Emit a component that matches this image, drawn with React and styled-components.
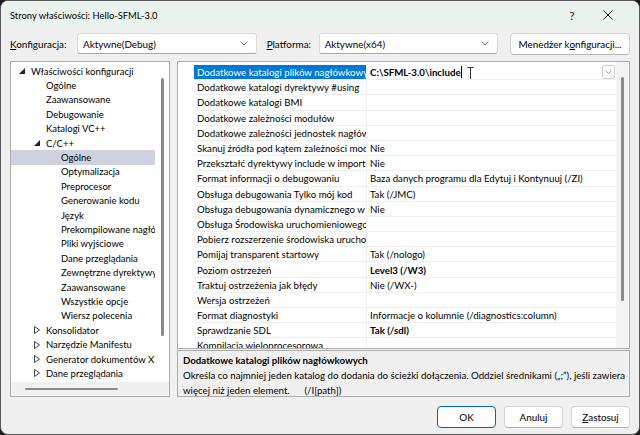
import React from "react";
import styled, { createGlobalStyle } from "styled-components";

const GlobalStyle = createGlobalStyle`
  html, body {
    margin: 0;
    padding: 0;
    background: #1c1c1c;
  }
  body {
    font-family: Lato, "Noto Sans", sans-serif;
    font-size: 9.9px;
    color: #000;
  }
  * {
    box-sizing: border-box;
  }
`;

const Window = styled.div`
  width: 640px;
  height: 435px;
  display: flex;
  flex-direction: column;
  background: #f0f0f0;
  border: 1px solid #5a5a5a;
  border-radius: 8px;
  overflow: hidden;
`;

const TitleBar = styled.div`
  height: 28px;
  flex-shrink: 0;
  display: flex;
  align-items: center;
  padding-left: 9px;
  background: #eaf3ee;
  font-size: 9.4px;
`;
const TitleText = styled.span`
  flex: 1;
`;
const CaptionButton = styled.div`
  width: 36px;
  height: 28px;
  display: flex;
  align-items: center;
  justify-content: center;
  font-size: 12px;
  color: #222;
`;

const Toolbar = styled.div`
  display: flex;
  align-items: center;
  height: 21px;
  margin-top: 4px;
  padding: 0 9px;
`;
const Label = styled.span`
  width: ${(p) => p.$w}px;
  flex-shrink: 0;
`;
const Combo = styled.div`
  width: 180px;
  height: 21px;
  display: flex;
  align-items: center;
  padding-left: 5px;
  padding-right: 8px;
  background: #fff;
  border: 1px solid #dcdcdc;
  border-bottom-color: #a8a8a8;
  border-radius: 3px;
  margin-right: ${(p) => p.$mr || 0}px;
  span {
    flex: 1;
  }
`;
const Button = styled.div`
  width: ${(p) => p.$w || 59}px;
  height: 22px;
  display: flex;
  align-items: center;
  justify-content: center;
  white-space: nowrap;
  background: #fdfdfd;
  border: ${(p) => (p.$default ? "1.5px solid #0067c0" : "1px solid #d4d4d4")};
  border-bottom-color: ${(p) => (p.$default ? "#0067c0" : "#b5b5b5")};
  border-radius: 4px;
  margin-left: ${(p) => p.$ml || 0}px;
`;

const Content = styled.div`
  display: flex;
  gap: 7px;
  margin-top: 7px;
  padding-left: 9px;
  height: 336px;
`;

const TreeBox = styled.div`
  width: 160px;
  display: flex;
  flex-direction: column;
  border: 1px solid #adadad;
  background: #fff;
  font-size: 9.5px;
`;
const TreeTop = styled.div`
  flex: 1;
  display: flex;
  min-height: 0;
`;
const TreeList = styled.div`
  flex: 1;
  overflow: hidden;
  padding-top: 2px;
`;
const TreeRow = styled.div`
  height: 14.4px;
  display: flex;
  align-items: center;
  white-space: nowrap;
  padding-left: ${(p) => 4 + p.$level * 15}px;
  background: ${(p) => (p.$selected ? "#cfd2de" : "transparent")};
`;
const Toggle = styled.span`
  width: 16px;
  flex-shrink: 0;
  display: flex;
  align-items: center;
  padding-left: 4px;
`;
const VScroll = styled.div`
  width: 14px;
  display: flex;
  justify-content: center;
  padding-top: ${(p) => p.$top}px;
  background: #fff;
`;
const VThumb = styled.div`
  width: 3px;
  height: ${(p) => p.$h}px;
  border-radius: 2px;
  background: #8a8a8a;
`;
const HScroll = styled.div`
  height: 14px;
  display: flex;
  align-items: center;
  padding-left: 14px;
  background: #f0f0f0;
`;
const HThumb = styled.div`
  width: 93px;
  height: 2px;
  border-radius: 1px;
  background: #8a8a8a;
`;

const RightCol = styled.div`
  width: 453px;
  display: flex;
  flex-direction: column;
  gap: 1px;
`;
const Grid = styled.div`
  height: 288px;
  display: flex;
  border: 1px solid #adadad;
  background: #fff;
  font-size: 9.7px;
`;
const Gutter = styled.div`
  width: 16px;
  flex-shrink: 0;
`;
const Rows = styled.div`
  width: 422px;
  overflow: hidden;
  padding-top: 3px;
`;
const Row = styled.div`
  height: 15.2px;
  display: flex;
  border-bottom: 1px solid #f0f0f0;
`;
const NameCell = styled.div`
  width: 172px;
  flex-shrink: 0;
  display: flex;
  align-items: center;
  padding-left: 3px;
  white-space: nowrap;
  overflow: hidden;
  background: ${(p) => (p.$selected ? "#0078d7" : "transparent")};
  color: ${(p) => (p.$selected ? "#fff" : "#000")};
`;
const ValueCell = styled.div`
  flex: 1;
  min-width: 0;
  display: flex;
  align-items: center;
  padding-left: 3px;
  white-space: nowrap;
  overflow: hidden;
  border-left: 1px solid #f0f0f0;
  font-weight: ${(p) => (p.$bold ? 700 : 400)};
  position: relative;
`;
const EditText = styled.span`
  flex: 1;
  display: flex;
  align-items: center;
`;
const Caret = styled.span`
  width: 1px;
  height: 12px;
  background: #000;
`;
const DropButton = styled.div`
  width: 13px;
  height: 14px;
  margin-right: 1px;
  display: flex;
  align-items: center;
  justify-content: center;
  border: 1px solid #cfcfcf;
  border-radius: 2px;
  background: #fff;
`;
const Cursor = styled.svg`
  position: absolute;
  left: 100px;
  top: 2px;
`;
const GridScroll = styled.div`
  width: 12px;
  flex-shrink: 0;
  display: flex;
  justify-content: center;
  padding-top: 15px;
  background: #f3f3f3;
`;

const Description = styled.div`
  height: 47px;
  border: 1px solid #adadad;
  background: #f0f0f0;
  padding: 2px 5px;
  line-height: 15px;
  font-size: 9.7px;
  white-space: nowrap;
  overflow: hidden;
`;
const DescTitle = styled.div`
  font-weight: 700;
`;

const Footer = styled.div`
  display: flex;
  justify-content: flex-end;
  margin-top: 9px;
  padding-right: 9px;
  gap: 8px;
`;

const Chevron = ({ size = 8, color = "#777" }) => (
  <svg width={size} height={size / 2 + 1} viewBox="0 0 8 5">
    <path d="M0.5 0.5 L4 4 L7.5 0.5" fill="none" stroke={color} strokeWidth="1" />
  </svg>
);

const Expanded = () => (
  <svg width="6" height="6" viewBox="0 0 6 6">
    <path d="M6 0 L6 6 L0 6 Z" fill="#222" />
  </svg>
);
const Collapsed = () => (
  <svg width="6" height="8" viewBox="0 0 6 8">
    <path d="M0.5 0.5 L5.5 4 L0.5 7.5 Z" fill="none" stroke="#444" strokeWidth="1" />
  </svg>
);

const tree = [
  { level: 0, text: "Właściwości konfiguracji", toggle: "open" },
  { level: 1, text: "Ogólne" },
  { level: 1, text: "Zaawansowane" },
  { level: 1, text: "Debugowanie" },
  { level: 1, text: "Katalogi VC++" },
  { level: 1, text: "C/C++", toggle: "open" },
  { level: 2, text: "Ogólne", selected: true },
  { level: 2, text: "Optymalizacja" },
  { level: 2, text: "Preprocesor" },
  { level: 2, text: "Generowanie kodu" },
  { level: 2, text: "Język" },
  { level: 2, text: "Prekompilowane nagłówki" },
  { level: 2, text: "Pliki wyjściowe" },
  { level: 2, text: "Dane przeglądania" },
  { level: 2, text: "Zewnętrzne dyrektywy include" },
  { level: 2, text: "Zaawansowane" },
  { level: 2, text: "Wszystkie opcje" },
  { level: 2, text: "Wiersz polecenia" },
  { level: 1, text: "Konsolidator", toggle: "closed" },
  { level: 1, text: "Narzędzie Manifestu", toggle: "closed" },
  { level: 1, text: "Generator dokumentów XML", toggle: "closed" },
  { level: 1, text: "Dane przeglądania", toggle: "closed" },
];

const props = [
  ["Dodatkowe katalogi dyrektywy #using", ""],
  ["Dodatkowe katalogi BMI", ""],
  ["Dodatkowe zależności modułów", ""],
  ["Dodatkowe zależności jednostek nagłówka", ""],
  ["Skanuj źródła pod kątem zależności modułów", "Nie"],
  ["Przekształć dyrektywy include w importy", "Nie"],
  ["Format informacji o debugowaniu", "Baza danych programu dla Edytuj i Kontynuuj (/ZI)"],
  ["Obsługa debugowania Tylko mój kod", "Tak (/JMC)"],
  ["Obsługa debugowania dynamicznego w C++", "Nie"],
  ["Obsługa Środowiska uruchomieniowego systemu Windows", ""],
  ["Pobierz rozszerzenie środowiska uruchomieniowego", ""],
  ["Pomijaj transparent startowy", "Tak (/nologo)"],
  ["Poziom ostrzeżeń", "Level3 (/W3)", true],
  ["Traktuj ostrzeżenia jak błędy", "Nie (/WX-)"],
  ["Wersja ostrzeżeń", ""],
  ["Format diagnostyki", "Informacje o kolumnie (/diagnostics:column)"],
  ["Sprawdzanie SDL", "Tak (/sdl)", true],
  ["Kompilacja wieloprocesorowa", ""],
];

export default function App() {
  return (
    <>
      <GlobalStyle />
      <Window>
        <TitleBar>
          <TitleText>Strony właściwości: Hello-SFML-3.0</TitleText>
          <CaptionButton>?</CaptionButton>
          <CaptionButton>
            <svg width="10" height="10" viewBox="0 0 10 10">
              <path d="M0.5 0.5 L9.5 9.5 M9.5 0.5 L0.5 9.5" stroke="#222" strokeWidth="1" />
            </svg>
          </CaptionButton>
          <div style={{ width: 13 }} />
        </TitleBar>

        <Toolbar>
          <Label $w={67}>
            <u>K</u>onfiguracja:
          </Label>
          <Combo $mr={10}>
            <span>Aktywne(Debug)</span>
            <Chevron />
          </Combo>
          <Label $w={52}>
            <u>P</u>latforma:
          </Label>
          <Combo $mr={12}>
            <span>Aktywne(x64)</span>
            <Chevron />
          </Combo>
          <Button $w={120}>
            Menedżer k<u>o</u>nfiguracji...
          </Button>
        </Toolbar>

        <Content>
          <TreeBox>
            <TreeTop>
              <TreeList>
                {tree.map((t, i) => (
                  <TreeRow key={i} $level={t.level} $selected={t.selected}>
                    <Toggle>
                      {t.toggle === "open" && <Expanded />}
                      {t.toggle === "closed" && <Collapsed />}
                    </Toggle>
                    {t.text}
                  </TreeRow>
                ))}
              </TreeList>
              <VScroll $top={16}>
                <VThumb $h={258} />
              </VScroll>
            </TreeTop>
            <HScroll>
              <HThumb />
            </HScroll>
          </TreeBox>

          <RightCol>
            <Grid>
              <Gutter />
              <Rows>
                <Row>
                  <NameCell $selected>Dodatkowe katalogi plików nagłówkowych</NameCell>
                  <ValueCell $bold>
                    <EditText>
                      C:\SFML-3.0\include
                      <Caret />
                    </EditText>
                    <DropButton>
                      <Chevron size={7} color="#888" />
                    </DropButton>
                    <Cursor width="7" height="15" viewBox="0 0 7 15">
                      <path
                        d="M0.5 0.5 H6.5 M3.5 0.5 V14.5 M0.5 14.5 H6.5"
                        stroke="#333"
                        strokeWidth="1"
                        fill="none"
                      />
                    </Cursor>
                  </ValueCell>
                </Row>
                {props.map(([name, value, bold], i) => (
                  <Row key={i}>
                    <NameCell>{name}</NameCell>
                    <ValueCell $bold={bold}>{value}</ValueCell>
                  </Row>
                ))}
              </Rows>
              <GridScroll>
                <VThumb $h={224} />
              </GridScroll>
            </Grid>
            <Description>
              <DescTitle>Dodatkowe katalogi plików nagłówkowych</DescTitle>
              <div>
                Określa co najmniej jeden katalog do dodania do ścieżki dołączenia. Oddziel średnikami („;”), jeśli zawiera
              </div>
              <div>więcej niż jeden element.&nbsp;&nbsp;&nbsp;&nbsp;&nbsp;&nbsp;(/I[path])</div>
            </Description>
          </RightCol>
        </Content>

        <Footer>
          <Button $default>OK</Button>
          <Button>Anuluj</Button>
          <Button>
            <u>Z</u>astosuj
          </Button>
        </Footer>
      </Window>
    </>
  );
}
